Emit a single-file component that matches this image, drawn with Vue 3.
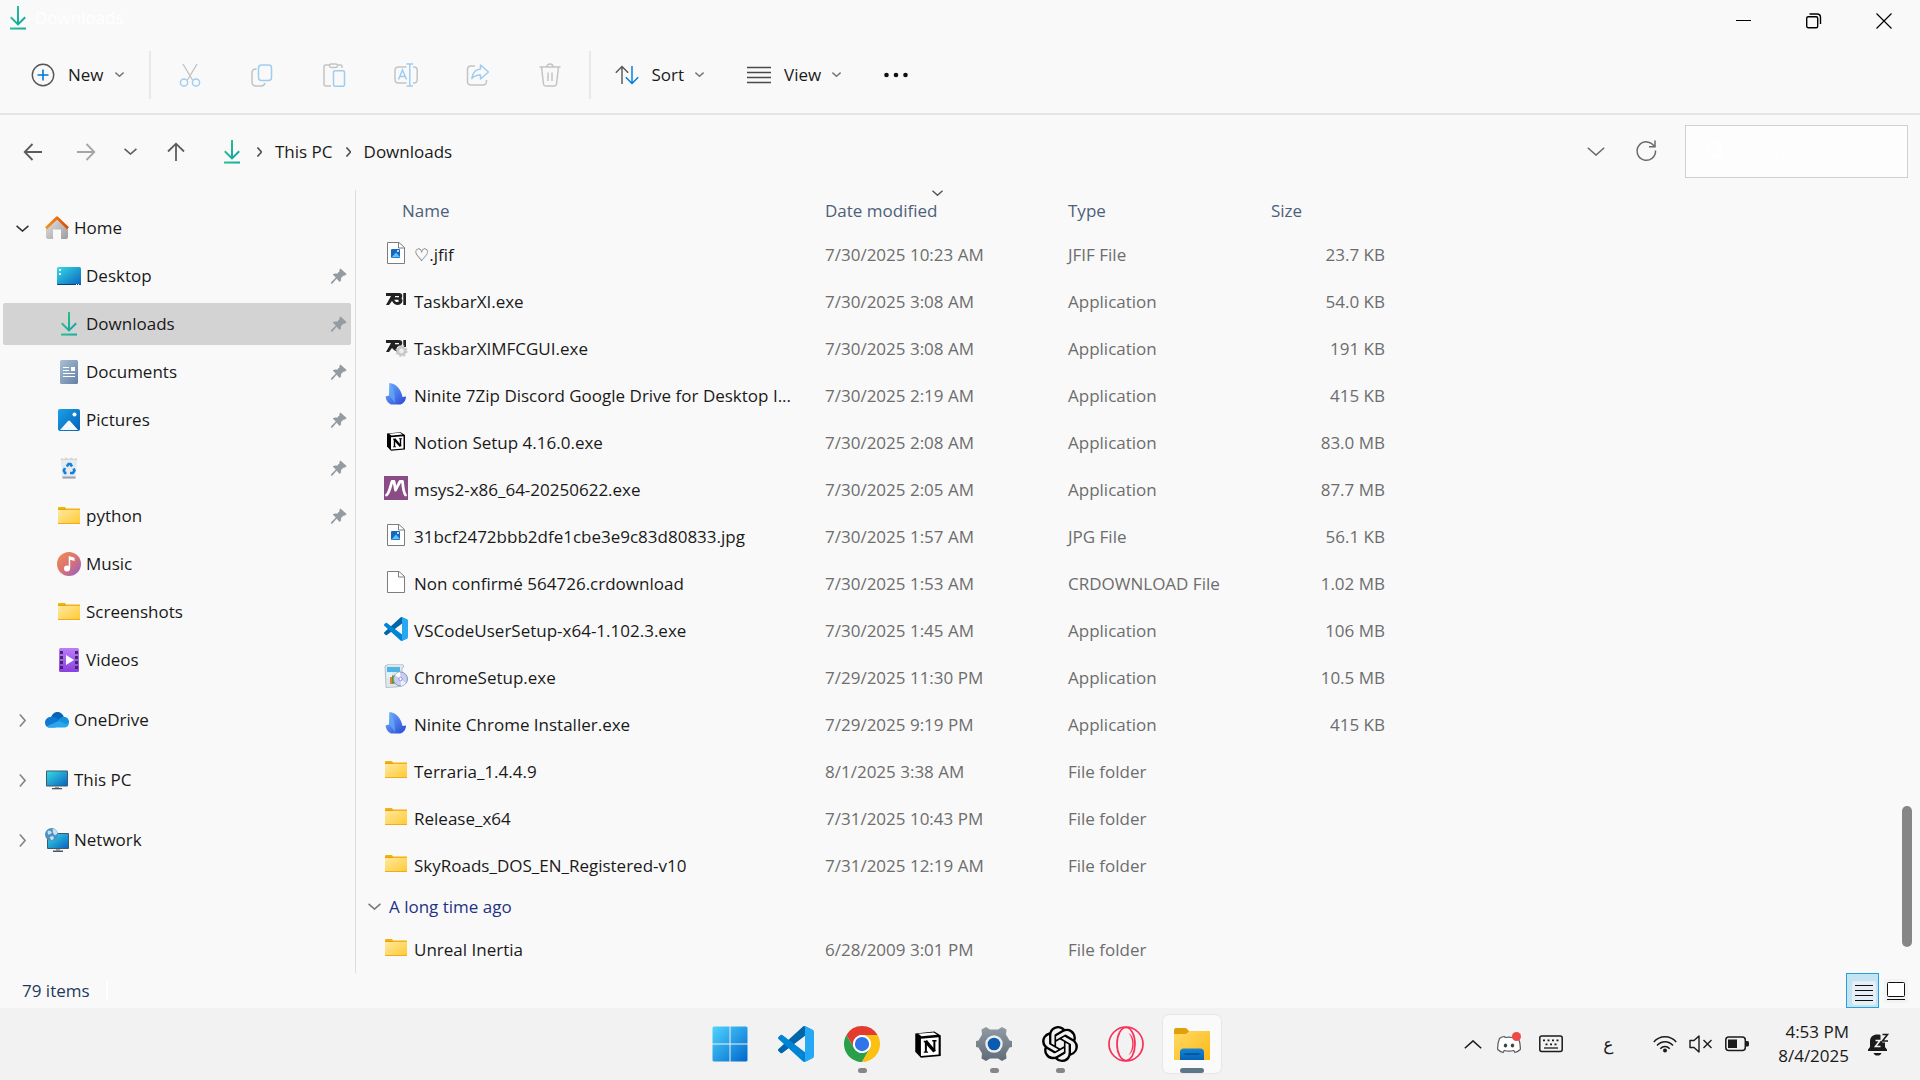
<script setup>
const editTools = [
  { icon: 'cut', label: 'Cut' },
  { icon: 'copy', label: 'Copy' },
  { icon: 'paste', label: 'Paste' },
  { icon: 'rename', label: 'Rename' },
  { icon: 'share', label: 'Share' },
  { icon: 'trash', label: 'Delete' },
]

const pinned = [
  { icon: 'desktop', name: 'Desktop', pin: true },
  { icon: 'download', name: 'Downloads', pin: true, active: true },
  { icon: 'documents', name: 'Documents', pin: true },
  { icon: 'pictures', name: 'Pictures', pin: true },
  { icon: 'recycle', name: '', pin: true },
  { icon: 'folder', name: 'python', pin: true },
  { icon: 'music', name: 'Music' },
  { icon: 'folder', name: 'Screenshots' },
  { icon: 'videos', name: 'Videos' },
]

const roots = [
  { icon: 'onedrive', name: 'OneDrive' },
  { icon: 'pc', name: 'This PC' },
  { icon: 'network', name: 'Network' },
]

const files = [
  { icon: 'image', name: '♡.jfif', date: '7/30/2025 10:23 AM', type: 'JFIF File', size: '23.7 KB' },
  { icon: 'tbi', name: 'TaskbarXI.exe', date: '7/30/2025 3:08 AM', type: 'Application', size: '54.0 KB' },
  { icon: 'tbigear', name: 'TaskbarXIMFCGUI.exe', date: '7/30/2025 3:08 AM', type: 'Application', size: '191 KB' },
  { icon: 'ninite', name: 'Ninite 7Zip Discord Google Drive for Desktop I...', date: '7/30/2025 2:19 AM', type: 'Application', size: '415 KB' },
  { icon: 'notion', name: 'Notion Setup 4.16.0.exe', date: '7/30/2025 2:08 AM', type: 'Application', size: '83.0 MB' },
  { icon: 'msys', name: 'msys2-x86_64-20250622.exe', date: '7/30/2025 2:05 AM', type: 'Application', size: '87.7 MB' },
  { icon: 'image', name: '31bcf2472bbb2dfe1cbe3e9c83d80833.jpg', date: '7/30/2025 1:57 AM', type: 'JPG File', size: '56.1 KB' },
  { icon: 'blank', name: 'Non confirmé 564726.crdownload', date: '7/30/2025 1:53 AM', type: 'CRDOWNLOAD File', size: '1.02 MB' },
  { icon: 'vscode', name: 'VSCodeUserSetup-x64-1.102.3.exe', date: '7/30/2025 1:45 AM', type: 'Application', size: '106 MB' },
  { icon: 'setup', name: 'ChromeSetup.exe', date: '7/29/2025 11:30 PM', type: 'Application', size: '10.5 MB' },
  { icon: 'ninite', name: 'Ninite Chrome Installer.exe', date: '7/29/2025 9:19 PM', type: 'Application', size: '415 KB' },
  { icon: 'folder', name: 'Terraria_1.4.4.9', date: '8/1/2025 3:38 AM', type: 'File folder', size: '' },
  { icon: 'folder', name: 'Release_x64', date: '7/31/2025 10:43 PM', type: 'File folder', size: '' },
  { icon: 'folder', name: 'SkyRoads_DOS_EN_Registered-v10', date: '7/31/2025 12:19 AM', type: 'File folder', size: '' },
]

const olderFiles = [
  { icon: 'folder', name: 'Unreal Inertia', date: '6/28/2009 3:01 PM', type: 'File folder', size: '' },
]

const apps = [
  { icon: 'start', label: 'Start' },
  { icon: 'vscode', label: 'Visual Studio Code' },
  { icon: 'chrome', label: 'Google Chrome', running: true },
  { icon: 'notion', label: 'Notion', small: true },
  { icon: 'settings', label: 'Settings', running: true },
  { icon: 'gpt', label: 'ChatGPT', running: true },
  { icon: 'opera', label: 'Opera' },
  { icon: 'explorer', label: 'File Explorer', active: true },
]
</script>

<template>
  <div class="desktop">
    <svg class="sprite" width="0" height="0" aria-hidden="true">
      <defs>
        <linearGradient id="gDown" x1="0" y1="0" x2="1" y2="1"><stop offset="0" stop-color="#2ecc87" /><stop offset="1" stop-color="#0d9ea6" /></linearGradient>
        <linearGradient id="gScreen" x1="0" y1="0" x2="1" y2="1"><stop offset="0" stop-color="#35dbe4" /><stop offset="1" stop-color="#0a64c0" /></linearGradient>
        <linearGradient id="gFolder" x1="0" y1="0" x2="1" y2="1"><stop offset="0" stop-color="#ffe8a0" /><stop offset="1" stop-color="#ffc931" /></linearGradient>
        <linearGradient id="gRoof" x1="0" y1="0" x2="1" y2="0"><stop offset="0" stop-color="#f7931a" /><stop offset="1" stop-color="#d84a0b" /></linearGradient>
        <linearGradient id="gWall" x1="0" y1="0" x2="1" y2="1"><stop offset="0" stop-color="#e4e4e4" /><stop offset="1" stop-color="#9c9c9c" /></linearGradient>
        <linearGradient id="gDoc" x1="0" y1="0" x2="1" y2="1"><stop offset="0" stop-color="#a9bfd8" /><stop offset="1" stop-color="#6580a3" /></linearGradient>
        <linearGradient id="gPic" x1="0" y1="0" x2="1" y2="1"><stop offset="0" stop-color="#1ba1e8" /><stop offset="1" stop-color="#0460b5" /></linearGradient>
        <linearGradient id="gMusic" x1="0" y1="0" x2="1" y2="1"><stop offset="0" stop-color="#f58e4d" /><stop offset=".55" stop-color="#d4707a" /><stop offset="1" stop-color="#8c62c9" /></linearGradient>
        <linearGradient id="gVideo" x1="0" y1="0" x2="0" y2="1"><stop offset="0" stop-color="#bb7df5" /><stop offset="1" stop-color="#8a40e0" /></linearGradient>
        <linearGradient id="gNinite" x1="0" y1="0" x2="1" y2="1"><stop offset="0" stop-color="#74b4ff" /><stop offset="1" stop-color="#2746d4" /></linearGradient>
        <linearGradient id="gStart" x1="0" y1="0" x2="1" y2="1"><stop offset="0" stop-color="#4fd4ff" /><stop offset="1" stop-color="#0067cc" /></linearGradient>
        <linearGradient id="gGear" x1="0" y1="0" x2="0" y2="1"><stop offset="0" stop-color="#929ba3" /><stop offset="1" stop-color="#5f6b77" /></linearGradient>
        <linearGradient id="gExplorer" x1="0" y1="0" x2="1" y2="1"><stop offset="0" stop-color="#ffda68" /><stop offset="1" stop-color="#fdb813" /></linearGradient>
        <linearGradient id="gTray" x1="0" y1="0" x2="0" y2="1"><stop offset="0" stop-color="#1485d8" /><stop offset="1" stop-color="#0662b4" /></linearGradient>
      </defs>

      <symbol id="i-download" viewBox="0 0 24 24">
        <path d="M11 0h2v18h-2zM5.500 10.500l6.500 6.500 6.500-6.500 1.400 1.400L12 19.700l-7.900-7.800z" fill="url(#gDown)" />
        <path d="M4 21.500h16v2H4z" fill="url(#gDown)" />
      </symbol>

      <symbol id="i-new" viewBox="0 0 24 24"><circle cx="12" cy="12" r="10.700" fill="none" stroke="#555" stroke-width="1.400" /><path d="M12 6.500v11M6.500 12h11" stroke="#0078d4" stroke-width="1.600" /></symbol>
      <symbol id="i-cut" viewBox="0 0 24 24"><path d="M5 1l9.500 16M19 1L9.500 17" stroke="#c4c4c4" stroke-width="1.400" fill="none" /><g fill="#f9f9f9" stroke="#9fcdf0" stroke-width="1.500"><circle cx="6" cy="19.500" r="3.600" /><circle cx="18" cy="19.500" r="3.600" /></g></symbol>
      <symbol id="i-copy" viewBox="0 0 24 24"><path d="M6.500 6C3.500 6 2 7 2 9.500V19c0 2.500 1.500 4 4 4h5c2.500 0 3.500-1 4-3" fill="none" stroke="#c4c4c4" stroke-width="1.500" /><rect x="8.500" y="2" width="13" height="15.500" rx="3" fill="none" stroke="#9fcdf0" stroke-width="1.500" /></symbol>
      <symbol id="i-paste" viewBox="0 0 24 24"><path d="M8 2H3.500C2.500 2 2 2.500 2 3.500v18c0 1 .5 1.500 1.500 1.500H9M16 2h2.500c1 0 1.500.5 1.500 1.500V5" fill="none" stroke="#c4c4c4" stroke-width="1.500" /><rect x="7.500" y="1" width="8" height="3.500" rx="1.700" fill="none" stroke="#c4c4c4" stroke-width="1.500" /><rect x="11.500" y="7.800" width="11" height="15.500" rx="1.500" fill="none" stroke="#9fcdf0" stroke-width="1.500" /></symbol>
      <symbol id="i-rename" viewBox="0 0 24 24"><path d="M12.500 4H4.500C2 4 1 5 1 7.500v9C1 19 2 20 4.500 20h8M19 4h1c2.200 0 3.200 1 3.200 3.500v9c0 2.500-1 3.500-3.200 3.500h-1" fill="none" stroke="#c4c4c4" stroke-width="1.500" /><path d="M4.500 16.500L8.500 7l4 9.500M6 13.500h5M15.800 1v22M12.500 1h6.500M12.500 23h6.500" fill="none" stroke="#9fcdf0" stroke-width="1.500" /></symbol>
      <symbol id="i-share" viewBox="0 0 24 24"><path d="M9 3H5C2.500 3 1.500 4.500 1.500 6.500v12C1.500 20.500 3 22 5 22h12c2.500 0 3.500-1.500 3.500-4v-1" fill="none" stroke="#c4c4c4" stroke-width="1.500" /><path d="M14.500 2l8 7-8 7v-4c-4 0-6.500 1-8.700 3.500C6.500 10 9.500 6.500 14.500 6z" fill="none" stroke="#9fcdf0" stroke-width="1.500" stroke-linejoin="round" /></symbol>
      <symbol id="i-trash" viewBox="0 0 24 24"><path d="M1.500 4h21M9 4c0-4 6-4 6 0M3.500 4l2 17c.2 1.500 1 2 2 2h9c1 0 1.800-.5 2-2l2-17M10 9.500v8.500M14 9.500v8.500" fill="none" stroke="#c4c4c4" stroke-width="1.500" /></symbol>
      <symbol id="i-sort" viewBox="0 0 24 24"><path d="M7 21V4M.8 9.700L7 3.500l6.200 6.200" fill="none" stroke="#555" stroke-width="1.400" /><path d="M17 3v17M10.800 14.300l6.200 6.200 6.200-6.200" fill="none" stroke="#0078d4" stroke-width="1.400" /></symbol>
      <symbol id="i-view" viewBox="0 0 24 24"><path d="M0 4.500h24M0 9.500h24M0 14.500h24M0 19.500h24" stroke="#4a4a4a" stroke-width="1.300" /></symbol>
      <symbol id="i-more" viewBox="0 0 24 24"><g fill="#111"><circle cx="2.500" cy="12" r="2.300" /><circle cx="12" cy="12" r="2.300" /><circle cx="21.500" cy="12" r="2.300" /></g></symbol>
      <symbol id="i-chev" viewBox="0 0 16 8"><path d="M.7.7L8 7.200 15.300.7" fill="none" stroke="currentColor" stroke-width="1.500" vector-effect="non-scaling-stroke" /></symbol>
      <symbol id="i-chevr" viewBox="0 0 8 16"><path d="M.7.7L7.200 8 .7 15.300" fill="none" stroke="currentColor" stroke-width="1.600" vector-effect="non-scaling-stroke" /></symbol>
      <symbol id="i-back" viewBox="0 0 24 24"><path d="M21 12H4M11.500 4L3.700 12l7.800 8" fill="none" stroke="currentColor" stroke-width="1.800" /></symbol>
      <symbol id="i-refresh" viewBox="0 0 24 24"><path d="M19.300 6.500A9.200 9.200 0 1 0 20.500 10.500M20 .5v6.300h-6" fill="none" stroke="#6a6a6a" stroke-width="1.500" /></symbol>
      <symbol id="i-search" viewBox="0 0 24 24"><circle cx="10" cy="10" r="7" fill="none" stroke="#fff" stroke-width="2" /><path d="M15 15l6 6" stroke="#fff" stroke-width="2" /></symbol>
      <symbol id="i-min" viewBox="0 0 16 16"><path d="M0 7.500h15" stroke="#000" /></symbol>
      <symbol id="i-restore" viewBox="0 0 16 16"><rect x=".7" y="3.700" width="11" height="11" rx="1.500" fill="none" stroke="#000" stroke-width="1.400" /><path d="M3.500 1h7.500c2.500 0 3.500 1 3.500 3.500V11" fill="none" stroke="#000" stroke-width="1.400" /></symbol>
      <symbol id="i-close" viewBox="0 0 16 16"><path d="M.5.5l15 15M15.500.5l-15 15" stroke="#000" stroke-width="1.200" /></symbol>
      <symbol id="i-pin" viewBox="0 0 16 16"><path d="M9.500.5L15.500 6c-.5 1.200-1.500 1.500-2.700 1.500L10 10c.3 2-.1 3-1.200 4L5.500 10.800 1.500 15.500 0 15.700v-1.500l4.800-4.700L1.700 6.500C3 5.500 4.200 5.300 6 5.700l2.500-2.500C8.300 2 8.700 1 9.500.5z" fill="#939ca2" /></symbol>

      <symbol id="i-home" viewBox="0 0 24 24"><path d="M1 11.500L12 2l11 9.500V21a2 2 0 0 1-2 2h-5v-9.500H8V23H3a2 2 0 0 1-2-2z" fill="url(#gWall)" /><path d="M1 12.300L12 1.800l11 10.500" fill="none" stroke="url(#gRoof)" stroke-width="2.800" stroke-linejoin="round" /></symbol>
      <symbol id="i-desktop" viewBox="0 0 24 24"><rect y="3" width="24" height="18" rx="1.500" fill="url(#gScreen)" /><path d="M0 20h24c0 .7-.5 1-1.500 1h-21C.5 21 0 20.700 0 20z" fill="#0a3f70" /><path d="M2 5h2v2H2zM2 9h2v2H2zM19 20h1v1h-1zM21 20h1v1h-1z" fill="#fff" /></symbol>
      <symbol id="i-documents" viewBox="0 0 24 24"><rect x="3" width="18" height="24" rx="1.500" fill="url(#gDoc)" /><path d="M14 7h4v4h-4zM6 7h6v1H6zM6 10h6v1H6zM6 13h12v1H6zM6 16h12v1H6z" fill="#fff" /></symbol>
      <symbol id="i-pictures" viewBox="0 0 24 24"><rect x="1" y="1" width="22" height="22" rx="2" fill="url(#gPic)" /><path d="M3 22l8-9q1-1 2 0l8 9z" fill="#f3f8fd" /><circle cx="17.500" cy="6.500" r="2" fill="#fff" /></symbol>
      <symbol id="i-recycle" viewBox="0 0 24 24"><path d="M3.500 3.500h17L18.500 22c0 .6-.4 1-1 1h-11c-.6 0-1-.4-1-1z" fill="#e8ebee" /><path d="M5.300 20.500h13.400l-.2 2H5.500z" fill="#9aa3ab" /><path d="M4 2l3 1 2-1.500L12 3l2-1.500L17 3l3-1v2H4z" fill="#d3d7da" /><path d="M9.800 10.500L11.500 8h2l1.500 2.500M16.500 12.500l1 2-1.500 2.500h-3M9.500 17H8l-1.200-2.500L8 12" fill="none" stroke="#1281dc" stroke-width="2.600" /></symbol>
      <symbol id="i-folder" viewBox="0 0 24 24"><path d="M1 4.500C1 3.500 1.500 3 2 3h6l1 1.500H23V9H1z" fill="#f5b012" /><path d="M1 6h22v14H1z" fill="url(#gFolder)" /><path d="M1 6h7.500L9.500 5H1z" fill="#e7a409" /><path d="M1 19h22v1H1z" fill="#eead1c" /></symbol>
      <symbol id="i-music" viewBox="0 0 24 24"><circle cx="12" cy="12" r="12" fill="url(#gMusic)" /><circle cx="10" cy="16.500" r="3" fill="#fff" /><path d="M11.700 4l5.800 1.800V9l-4.300-1.200v8.700h-1.500z" fill="#fff" /></symbol>
      <symbol id="i-videos" viewBox="0 0 24 24"><rect x="2" width="20" height="24" rx="1.500" fill="url(#gVideo)" /><path d="M3 3h3v3H3zM3 8h3v3H3zM3 13h3v3H3zM3 18h3v3H3zM18 3h3v3h-3zM18 8h3v3h-3zM18 13h3v3h-3zM18 18h3v3h-3z" fill="#44266d" /><path d="M9 7l8 5-8 5z" fill="#fff" /></symbol>
      <symbol id="i-onedrive" viewBox="0 0 24 24"><path d="M6 9C8 5 10 4 12.500 4c3 0 5.500 2 6.300 5l-6 4z" fill="#0364b8" /><path d="M5.500 9c2.500-.5 4.500 0 6.500 1.500l7 5-9 4H5C2 19.500 0 17.500 0 14.500S2.500 9 5.500 9z" fill="#0f78d4" /><path d="M19 9c3 0 5 2.500 5 5.500s-2 5-5 5H5c-1.500 0-2.500-.3-3.500-1.300L13.500 13c2-2.500 3.500-4 5.500-4z" fill="#28a8ea" /><path d="M13 12.500C15 10 16.500 9 19 9c2.500 0 4.500 2 5 4.500l-2 3z" fill="#1490df" /></symbol>
      <symbol id="i-pc" viewBox="0 0 24 24"><rect x="1" y="2.500" width="22" height="16" rx="1" fill="#3e5a6c" /><path d="M2 3.500h20v14H2z" fill="url(#gScreen)" /><path d="M10 18.500h4V20h-4z" fill="#9aa1a8" /><path d="M7 20h10v1.300H7z" fill="#4c565f" /></symbol>
      <symbol id="i-network" viewBox="0 0 24 24"><rect x="2" y="5" width="22" height="16" rx="1" fill="#3e5a6c" /><path d="M3 6h20v14H3z" fill="url(#gScreen)" /><path d="M11 21h4v1.500h-4z" fill="#9aa1a8" /><path d="M8 22.500h10V24H8z" fill="#4c565f" /><circle cx="6.500" cy="6.500" r="6.500" fill="#4f90c0" /><path d="M2.500 3.500C4.500 1.500 5.500 3 6.500 4s-2 3-3.500 2.500zM7.500 1c3 0 4.500 2 5 4.500L10 7.500 8 5zM4.500 9L8 8l1 2.500-2.500 2z" fill="#c6e1f1" /></symbol>

      <symbol id="i-blank" viewBox="0 0 24 24"><path d="M3.500 1.500H15L20.500 6.500V22.500h-17z" fill="#fff" stroke="#7d7d7d" /><path d="M14.500 1.500v5.500h6" fill="none" stroke="#7d7d7d" /></symbol>
      <symbol id="i-image" viewBox="0 0 24 24"><path d="M3.500 1.500H15L20.500 6.500V22.500h-17z" fill="#fff" stroke="#7d7d7d" /><path d="M14.500 1.500v5.500h6" fill="none" stroke="#7d7d7d" /><rect x="7" y="8" width="9" height="9" rx="1" fill="#1767c0" /><path d="M7.500 16.500l4.500-5 4 4.500z" fill="#5bc6f5" /><circle cx="14" cy="10" r="1" fill="#fff" /></symbol>
      <symbol id="i-tbi" viewBox="0 0 24 24"><path d="M2 5h13c3.500 0 4 3 2.500 5.300 2.500 3-.5 6.700-3.500 6.700-2.500 0-4-1-6-4l-3 4H2l5-9H2z" fill="#222" /><path d="M11 8h4v1.300h-4zM10 11.700h4.500V14H12z" fill="#f9f9f9" /><path d="M19.300 5H22v12h-2.700z" fill="#222" /></symbol>
      <symbol id="i-tbigear" viewBox="0 0 24 24"><path d="M2 5h13c3.500 0 4 3 2.500 5.300L13 12v4.500c-2-.5-3.500-1.500-5-3.500l-3 4H2l5-9H2z" fill="#222" /><path d="M11 8h4v1.300h-4z" fill="#f9f9f9" /><path d="M19.300 5H22v7h-2.700z" fill="#222" /><circle cx="17.500" cy="16" r="3.700" fill="#ededed" stroke="#c8c8c8" stroke-width="2.500" /><circle cx="17.500" cy="16" r="5.300" fill="none" stroke="#c8c8c8" stroke-width="1.500" stroke-dasharray="2 2.200" /></symbol>
      <symbol id="i-ninite" viewBox="0 0 24 24"><path d="M5.500 1C12 1.500 17 7 18.500 15l3.500-.5c0 4-2.500 7-5.500 8H7C4 21 2 18.500 1.500 14.500L5 13.500z" fill="url(#gNinite)" /><path d="M5.500 1c3 4 6 9 5.500 20-2-3-4-5-6-7.500z" fill="#69aefc" opacity=".65" /></symbol>
      <symbol id="i-notion" viewBox="0 0 24 24"><path d="M3 4.500l13.500-1.300L21 6v14.500L7 21.700 3 17.500z" fill="#000" /><path d="M5 4.800l11-1 2.500 1.600L7.500 6.500z" fill="#fff" /><path d="M7 8.300l12.500-1V19.400L7 20.400z" fill="#fff" /><path d="M10.500 10.300v7.400M16.500 9.800v7.400" stroke="#000" stroke-width="1.400" /><path d="M10.300 10l6.300 7.300" stroke="#000" stroke-width="2.400" /><path d="M9 10.100h2.600M15 9.700h3M9 17.800h3" stroke="#000" stroke-width=".9" /></symbol>
      <symbol id="i-msys" viewBox="0 0 24 24"><path d="M0 0h24v24H0z" fill="#894c84" /><path d="M2.500 19C5 18 6.500 10 8 5.500h2L11.500 14 16 5.500h2.500c.5 6 1 11 3 13.500" fill="none" stroke="#fff" stroke-width="2.800" stroke-linejoin="round" stroke-linecap="round" /></symbol>
      <symbol id="i-setup" viewBox="0 0 24 24"><path d="M1 2l4-2h13l2 2-2 3v17l-6 1-10 .5z" fill="#dfe7ee" stroke="#a8b5bf" stroke-width=".8" /><path d="M3 3h13v5H3z" fill="#52b4e6" /><path d="M3 9l5-1v5l-5 1z" fill="#e4f4fb" /><path d="M6 13h4v7H6z" fill="#e8812c" /><path d="M8 11.500h3.500v8H8z" fill="#3ca53c" /><circle cx="16.500" cy="15" r="7" fill="#c7cdf4" stroke="#8e97a6" /><path d="M16.500 15L11 11a7 7 0 0 1 5-3z" fill="#fff" /><path d="M16.500 15l5.500 4a7 7 0 0 1-5 3z" fill="#eef" /><circle cx="16.500" cy="15" r="1.700" fill="#fff" stroke="#8e97d6" /></symbol>
      <symbol id="i-vscode" viewBox="0 0 100 100"><path d="M96.460 10.800L75.860.880A6.250 6.250 0 0 0 68.750 2.080L1.300 63.580a4.170 4.170 0 0 0 0 6.170l5.510 5a4.170 4.170 0 0 0 5.320.240L93.360 13.370C96.090 11.300 100 13.250 100 16.670v-.240a6.250 6.250 0 0 0-3.540-5.630z" fill="#0065a9" /><path d="M96.460 89.200l-20.600 9.920a6.250 6.250 0 0 1-7.110-1.200L1.300 36.420a4.170 4.170 0 0 1 0-6.170l5.510-5a4.170 4.170 0 0 1 5.320-.240l81.230 61.620c2.730 2.070 6.640.120 6.640-3.300v.240a6.250 6.250 0 0 1-3.540 5.630z" fill="#0085d6" /><path d="M75.860 99.130a6.250 6.250 0 0 1-7.110-1.210C71.060 100.220 75 98.590 75 95.330V4.670c0-3.260-3.940-4.890-6.250-2.590A6.250 6.250 0 0 1 75.860.870l20.600 9.910A6.250 6.250 0 0 1 100 16.410v67.180a6.250 6.250 0 0 1-3.540 5.630z" fill="#27a8f4" /></symbol>

      <symbol id="i-start" viewBox="0 0 36 36"><rect x=".5" y=".5" width="35" height="35" rx="1.500" fill="url(#gStart)" /><path d="M17.500 0h1v36h-1zM0 17.500h36v1H0z" fill="#f2f2f2" /></symbol>
      <symbol id="i-chrome" viewBox="0 0 48 48"><path d="M24 0A24 24 0 0 1 44.780 12H24a12 12 0 0 0-10.390 18L3.220 12A24 24 0 0 1 24 0z" fill="#e33b2e" /><path d="M3.220 12L13.610 30A12 12 0 0 0 34.390 30L24 48A24 24 0 0 1 3.220 12z" fill="#2a9f4b" /><path d="M44.780 12A24 24 0 0 1 24 48L34.390 30A12 12 0 0 0 24 12z" fill="#fcc012" /><circle cx="24" cy="24" r="12" fill="#fff" /><circle cx="24" cy="24" r="9.500" fill="#2f74ea" /></symbol>
      <symbol id="i-settings" viewBox="0 0 36 36"><path d="M10 1l4 2.500h8L26 1l4.500 2.500-.5 5 3.500 6 2.500.5v6l-2.500.5-3.500 6 .5 5L26 35l-4-2.500h-8L10 35l-4.500-2.500.5-5-3.500-6L0 21v-6l2.500-.5 3.500-6-.5-5z" fill="url(#gGear)" /><circle cx="18" cy="18" r="8.700" fill="#eceef0" /><circle cx="18" cy="18" r="6.300" fill="#0b5cb0" /></symbol>
      <symbol id="i-gpt" viewBox="0 0 24 24"><path d="M22.282 9.821a5.985 5.985 0 0 0-.516-4.910 6.046 6.046 0 0 0-6.510-2.900A6.065 6.065 0 0 0 4.981 4.182a5.985 5.985 0 0 0-3.998 2.900 6.046 6.046 0 0 0 .743 7.097 5.980 5.980 0 0 0 .511 4.911 6.051 6.051 0 0 0 6.515 2.900A5.985 5.985 0 0 0 13.260 24a6.056 6.056 0 0 0 5.772-4.206 5.990 5.990 0 0 0 3.998-2.900 6.056 6.056 0 0 0-.748-7.073zm-9.022 12.608a4.476 4.476 0 0 1-2.876-1.041l.142-.080 4.778-2.758a.795.795 0 0 0 .393-.681v-6.737l2.020 1.169a.071.071 0 0 1 .038.052v5.583a4.504 4.504 0 0 1-4.495 4.494zm-9.661-4.125a4.471 4.471 0 0 1-.535-3.014l.142.085 4.783 2.758a.771.771 0 0 0 .781 0l5.843-3.369v2.332a.080.080 0 0 1-.033.062L9.740 19.950a4.499 4.499 0 0 1-6.141-1.646zM2.341 7.896a4.485 4.485 0 0 1 2.366-1.973V11.600a.766.766 0 0 0 .388.677l5.814 3.354-2.020 1.169a.076.076 0 0 1-.071 0l-4.830-2.787A4.504 4.504 0 0 1 2.341 7.872zm16.596 3.856L13.104 8.364 15.119 7.200a.076.076 0 0 1 .071 0l4.830 2.791a4.494 4.494 0 0 1-.677 8.104v-5.677a.790.790 0 0 0-.407-.667zm2.011-3.023l-.142-.085-4.774-2.782a.776.776 0 0 0-.785 0L9.409 9.230V6.897a.066.066 0 0 1 .028-.062l4.830-2.787a4.499 4.499 0 0 1 6.680 4.660zM8.307 12.863l-2.020-1.164a.080.080 0 0 1-.038-.057V6.074a4.499 4.499 0 0 1 7.376-3.454l-.142.081L8.704 5.459a.795.795 0 0 0-.393.681zm1.098-2.365l2.602-1.500 2.607 1.500v2.999l-2.597 1.500-2.607-1.500z" fill="#000" /></symbol>
      <symbol id="i-opera" viewBox="0 0 36 36"><g fill="none" stroke="#fa2e56"><circle cx="18" cy="18" r="17" stroke-width="1.700" /><ellipse cx="18" cy="18" rx="9" ry="16.500" stroke-width="1.700" /></g><path d="M20.500 7c7 3 7 19 0 22 5-5.500 5-16.500 0-22z" fill="#fa2e56" /></symbol>
      <symbol id="i-explorer" viewBox="0 0 36 36"><path d="M0 4.500C0 3 .7 2 2 2h10l3 3v4H0z" fill="#dfa008" /><path d="M0 8h12l3.500-3H36v29H0z" fill="url(#gExplorer)" /><path d="M6 34v-8c0-2 1.500-3.500 3.500-3.500h17c2 0 3.500 1.500 3.500 3.500v8z" fill="url(#gTray)" /><path d="M10.500 28h15" stroke="#044f91" stroke-width="1.500" /></symbol>

      <symbol id="i-discord" viewBox="0 0 24 24"><path d="M7 4.500l1.500 1c2.500-.5 4.500-.5 7 0l1.500-1c2 .3 3.500 1 4.500 2 1.500 3.500 2 7 1.800 11-1.800 1.600-3.500 2.500-5.300 3l-1.300-2c-3 .7-6.400.7-9.400 0L6 20.500c-1.800-.5-3.500-1.400-5.300-3-.2-4 .3-7.500 1.800-11 1-1 2.500-1.700 4.500-2z" fill="#fff" stroke="#5a5a5a" stroke-width="1.200" /><ellipse cx="8.500" cy="13.500" rx="1.700" ry="2" fill="#444" /><ellipse cx="15.500" cy="13.500" rx="1.700" ry="2" fill="#444" /><circle cx="19.500" cy="4.500" r="4.500" fill="#f04747" /></symbol>
      <symbol id="i-keyboard" viewBox="0 0 24 24"><rect x=".8" y="4" width="22.400" height="15.500" rx="2" fill="none" stroke="#1b1b1b" stroke-width="1.500" /><path d="M4 8.300h2M8.500 8.300h2M13 8.300h2M17.500 8.300h2M6.500 12.300h2M11 12.300h2M15.500 12.300h2" stroke="#1b1b1b" stroke-width="1.800" /><path d="M5 16h14" stroke="#1b1b1b" stroke-width="1.300" /></symbol>
      <symbol id="i-wifi" viewBox="0 0 24 24"><path d="M.8 10c6-7 16.400-7 22.400 0M4 13.500c4.500-5 11.500-5 16 0M7.300 16.700c2.700-3 6.700-3 9.400 0" fill="none" stroke="#1b1b1b" stroke-width="1.500" /><circle cx="12" cy="18.500" r="2" fill="#1b1b1b" /></symbol>
      <symbol id="i-volume" viewBox="0 0 24 24"><path d="M1 8.500h4l5-4.500v16l-5-4.500H1z" fill="none" stroke="#1b1b1b" stroke-width="1.400" stroke-linejoin="round" /><path d="M14.500 8l8 8M22.500 8l-8 8" stroke="#1b1b1b" stroke-width="1.400" /></symbol>
      <symbol id="i-battery" viewBox="0 0 24 24"><rect x=".8" y="5" width="19.500" height="13.500" rx="3" fill="none" stroke="#1b1b1b" stroke-width="1.500" /><path d="M3 7.500h9v8.500H3z" fill="#1b1b1b" /><path d="M21 9h1.500c1 0 1.500.7 1.500 2.700s-.5 2.800-1.500 2.800H21z" fill="#1b1b1b" /></symbol>
      <symbol id="i-bell" viewBox="0 0 24 24"><path d="M2 17.500l2-2.500v-5.500C4 5 7 2.500 11.500 2.500S19 5 19 9.500V15l2 2.500v1.500H2zM7.500 21h8c-.5 1.700-2 2.600-4 2.600S8 22.700 7.500 21z" fill="#1b1b1b" /><path d="M14.500 1H24v9.500h-7.500L14.500 8z" fill="#f2f2f2" /><path d="M9.500 8.500h4.500l-4.500 6h5" fill="none" stroke="#f2f2f2" stroke-width="1.600" /><path d="M16.500 2.500h5L16.500 9h5.500" fill="none" stroke="#1b1b1b" stroke-width="1.600" /></symbol>
      <symbol id="i-details" viewBox="0 0 24 24"><rect width="24" height="24" rx="3" fill="#e6eff5" /><path d="M3 4.500h18M3 9.500h18M3 14.500h18M3 19.500h18" stroke="#111" /></symbol>
      <symbol id="i-tiles" viewBox="0 0 24 24"><rect width="24" height="24" rx="3" fill="#f3f3f3" /><rect x="3.500" y="3.500" width="17" height="14" rx="1" fill="#fff" stroke="#111" /><path d="M3 20.500h18" stroke="#111" /></symbol>
    </svg>

    <div class="window">
      <header class="titlebar">
        <svg class="ic"><use href="#i-download" /></svg>
        <h1 class="title">Downloads</h1>
        <div class="controls">
          <button aria-label="Minimize"><svg class="ic16"><use href="#i-min" /></svg></button>
          <button aria-label="Restore"><svg class="ic16"><use href="#i-restore" /></svg></button>
          <button aria-label="Close"><svg class="ic16"><use href="#i-close" /></svg></button>
        </div>
      </header>

      <div class="toolbar" role="toolbar">
        <button class="labelled"><svg class="ic"><use href="#i-new" /></svg>New<svg class="drop"><use href="#i-chev" /></svg></button>
        <span class="sep"></span>
        <button v-for="t in editTools" :key="t.icon" class="tool" :aria-label="t.label" disabled><svg class="ic"><use :href="'#i-' + t.icon" /></svg></button>
        <span class="sep"></span>
        <button class="labelled"><svg class="ic"><use href="#i-sort" /></svg>Sort<svg class="drop"><use href="#i-chev" /></svg></button>
        <button class="labelled"><svg class="ic"><use href="#i-view" /></svg>View<svg class="drop"><use href="#i-chev" /></svg></button>
        <button class="more" aria-label="See more"><svg class="ic"><use href="#i-more" /></svg></button>
      </div>

      <div class="address">
        <button class="nav" aria-label="Back"><svg class="arrow"><use href="#i-back" /></svg></button>
        <button class="nav faded" aria-label="Forward"><svg class="arrow forward"><use href="#i-back" /></svg></button>
        <button class="recent" aria-label="Recent locations"><svg class="chev"><use href="#i-chev" /></svg></button>
        <button class="nav" aria-label="Up"><svg class="arrow up"><use href="#i-back" /></svg></button>
        <nav class="crumbs" aria-label="Path">
          <svg class="ic"><use href="#i-download" /></svg>
          <svg class="crumb-sep"><use href="#i-chevr" /></svg>
          <a href="#">This PC</a>
          <svg class="crumb-sep"><use href="#i-chevr" /></svg>
          <a href="#">Downloads</a>
        </nav>
        <button class="side" aria-label="Previous locations"><svg class="chev wide"><use href="#i-chev" /></svg></button>
        <button class="side" aria-label="Refresh"><svg class="ic"><use href="#i-refresh" /></svg></button>
        <label class="search">
          <svg class="ic"><use href="#i-search" /></svg>
          <input type="search" placeholder="Search Downloads" aria-label="Search Downloads" />
        </label>
      </div>

      <div class="body">
        <nav class="sidebar" aria-label="Folders">
          <a href="#" class="row root"><span class="toggle"><svg class="chev"><use href="#i-chev" /></svg></span><svg class="ic"><use href="#i-home" /></svg>Home</a>
          <a v-for="p in pinned" :key="p.icon + p.name" href="#" class="row child" :class="{ active: p.active }">
            <svg class="ic"><use :href="'#i-' + p.icon" /></svg><span class="label">{{ p.name }}</span>
            <svg v-if="p.pin" class="ic16"><use href="#i-pin" /></svg>
          </a>
          <a v-for="r in roots" :key="r.icon" href="#" class="row root spaced"><span class="toggle closed"><svg class="chevr"><use href="#i-chevr" /></svg></span><svg class="ic"><use :href="'#i-' + r.icon" /></svg>{{ r.name }}</a>
        </nav>

        <main class="files">
          <table>
            <colgroup><col class="c-name" /><col class="c-date" /><col class="c-type" /><col class="c-size" /></colgroup>
            <thead>
              <tr>
                <th class="h-name">Name</th>
                <th class="h-date">Date modified<svg class="sorted"><use href="#i-chev" /></svg></th>
                <th>Type</th>
                <th>Size</th>
              </tr>
            </thead>
            <tbody>
              <tr v-for="f in files" :key="f.name">
                <td><div class="file"><svg class="ic"><use :href="'#i-' + f.icon" /></svg>{{ f.name }}</div></td>
                <td>{{ f.date }}</td>
                <td>{{ f.type }}</td>
                <td class="size">{{ f.size }}</td>
              </tr>
            </tbody>
            <tbody>
              <tr class="group">
                <td colspan="4"><div class="group-head"><svg class="chev"><use href="#i-chev" /></svg>A long time ago</div></td>
              </tr>
              <tr v-for="f in olderFiles" :key="f.name">
                <td><div class="file"><svg class="ic"><use :href="'#i-' + f.icon" /></svg>{{ f.name }}</div></td>
                <td>{{ f.date }}</td>
                <td>{{ f.type }}</td>
                <td class="size">{{ f.size }}</td>
              </tr>
            </tbody>
          </table>
          <div class="scrollbar"><div class="thumb"></div></div>
        </main>
      </div>

      <footer class="status">
        <span class="count">79 items</span>
        <button class="mode on" aria-label="Details view"><svg class="ic"><use href="#i-details" /></svg></button>
        <button class="mode" aria-label="Large icons view"><svg class="ic"><use href="#i-tiles" /></svg></button>
      </footer>
    </div>

    <div class="taskbar">
      <nav class="apps" aria-label="Taskbar">
        <button v-for="a in apps" :key="a.icon" :aria-label="a.label" :class="{ running: a.running, current: a.active, small: a.small }"><svg class="app"><use :href="'#i-' + a.icon" /></svg></button>
      </nav>
      <div class="tray">
        <button aria-label="Show hidden icons"><svg class="chev wide flip"><use href="#i-chev" /></svg></button>
        <button aria-label="Discord"><svg class="ic"><use href="#i-discord" /></svg></button>
        <button class="keys" aria-label="Touch keyboard"><svg class="ic"><use href="#i-keyboard" /></svg></button>
        <button class="lang" lang="ar">ع</button>
        <button aria-label="Network"><svg class="ic"><use href="#i-wifi" /></svg></button>
        <button aria-label="Volume"><svg class="ic"><use href="#i-volume" /></svg></button>
        <button aria-label="Battery"><svg class="ic"><use href="#i-battery" /></svg></button>
        <button class="clock"><span>4:53 PM</span><span>8/4/2025</span></button>
        <button aria-label="Notifications"><svg class="ic"><use href="#i-bell" /></svg></button>
      </div>
    </div>
  </div>
</template>

<style>
body {
  margin: 0;
  background: #f9f9f9;
}
</style>

<style scoped>
.desktop {
  display: flex;
  flex-direction: column;
  min-height: 100vh;
  font-family: "Open Sans", "Noto Sans", "DejaVu Sans", sans-serif;
  font-size: 17px;
  line-height: 24px;
  color: #191919;
  background: #f9f9f9;
}
.sprite { position: absolute; }
button {
  display: flex;
  align-items: center;
  justify-content: center;
  padding: 0;
  border: 0;
  background: none;
  font: inherit;
  color: inherit;
}
a { color: inherit; text-decoration: none; }
svg { flex: none; display: block; }
.ic { width: 24px; height: 24px; }
.ic16 { width: 16px; height: 16px; }
.chev { width: 13px; height: 7px; }
.chevr { width: 7px; height: 13px; }
.wide { width: 18px; height: 9px; }
.flip { transform: scaleY(-1); }

.window { flex: 1; display: flex; flex-direction: column; }

.titlebar { display: flex; align-items: center; height: 36px; padding: 0 1px 0 6px; }
.title { margin: 0 0 0 5px; font-size: 17px; font-weight: 400; color: #fff; }
.controls { display: flex; margin-left: auto; }
.controls button { width: 70px; height: 36px; padding-top: 6px; }

.toolbar { display: flex; align-items: center; height: 77px; padding-left: 10px; border-bottom: 2px solid #e5e5e5; }
.labelled { gap: 13px; height: 48px; padding: 0 22px 0 21px; }
.drop { width: 9px; height: 5px; margin-left: -2px; color: #777; }
.tool { width: 72px; height: 48px; }
.more { width: 66px; height: 48px; }
.sep { width: 2px; height: 48px; margin: 0 3px; background: #e8e8e8; }

.address { display: flex; align-items: center; height: 73px; padding: 0 12px 2px 6px; }
.nav { width: 53px; height: 48px; color: #5c5c5c; }
.faded { color: #a5a5a5; }
.arrow { width: 24px; height: 24px; }
.forward { transform: rotate(180deg); }
.up { transform: rotate(90deg); }
.recent { width: 37px; height: 48px; color: #5c5c5c; }
.crumbs { display: flex; flex: 1; align-items: center; gap: 13px; padding-left: 18px; }
.crumb-sep { width: 5px; height: 10px; color: #555; }
.side { width: 51px; height: 48px; color: #6a6a6a; }
.search {
  display: flex;
  align-items: center;
  box-sizing: border-box;
  width: 223px;
  height: 53px;
  margin-left: 13px;
  padding: 0 12px 0 18px;
  gap: 18px;
  border: 1px solid #d0d0d0;
  background: #fdfdfd;
}
.search input { flex: 1; min-width: 0; padding: 0; border: 0; outline: 0; background: none; font: inherit; color: #fff; }
.search input::placeholder { color: #fff; opacity: 1; }

.body { flex: 1; display: flex; }
.sidebar { display: flex; flex-direction: column; gap: 6px; box-sizing: border-box; width: 356px; padding: 17px 4px 0 3px; border-right: 1px solid #dedede; }
.row { display: flex; align-items: center; gap: 5px; height: 42px; padding-right: 4px; border-radius: 2px; }
.root { padding-left: 7px; }
.child { padding-left: 54px; }
.spaced { margin-top: 12px; }
.active { background: #d3d3d3; }
.label { flex: 1; }
.toggle { display: flex; justify-content: center; width: 24px; margin-right: 6px; color: #333; }
.closed { color: #858585; }

.files { flex: 1; display: flex; justify-content: space-between; }
table { width: 1029px; table-layout: fixed; border-collapse: collapse; align-self: flex-start; }
.c-name { width: 469px; }
.c-date { width: 243px; }
.c-type { width: 203px; }
.c-size { width: 114px; }
th { height: 41px; padding: 0; text-align: left; font-weight: 400; color: #4c607a; }
.h-name { padding-left: 46px; }
.h-date { position: relative; }
.sorted { position: absolute; top: 0; left: 107px; width: 11px; height: 6px; color: #555; }
td { height: 47px; padding: 0; color: #6d6d6d; white-space: nowrap; }
.file { display: flex; align-items: center; gap: 6px; padding-left: 28px; color: #191919; }
.file .ic { margin-bottom: 3px; }
.size { text-align: right; }
.group td { height: 37px; }
.group-head { display: flex; align-items: center; gap: 8px; padding: 0 0 2px 12px; color: #1e3287; }
.group-head .chev { color: #777; }
.scrollbar { display: flex; flex-direction: column; justify-content: flex-end; width: 10px; padding: 0 8px 26px 0; }
.thumb { height: 141px; border-radius: 5px; background: #868686; }

.status { display: flex; align-items: center; height: 35px; padding: 0 8px 0 22px; }
.count { margin-right: auto; padding-right: 16px; border-right: 2px solid #fff; line-height: 18px; color: #1e395b; }
.mode { box-sizing: border-box; width: 33px; height: 35px; }
.mode.on { border: 1px solid #26a0da; background: #c5e4f3; }
.mode.on .ic { margin: 4px 0 0 3px; }

.taskbar { display: grid; grid-template-columns: 1fr auto 1fr; align-items: center; height: 72px; background: #f2f2f2; }
.apps { grid-column: 2; display: flex; gap: 8px; padding-left: 2px; }
.apps button { position: relative; box-sizing: border-box; width: 58px; height: 58px; border-radius: 6px; }
.app { width: 36px; height: 36px; }
.apps .small .app { width: 34px; height: 34px; }
.apps .current { background: #fafafa; box-shadow: 0 0 1px 1px #e6e6e6; }
.running::after,
.current::after { content: ""; position: absolute; bottom: 0; left: 25px; width: 9px; height: 5px; border-radius: 3px; background: #868686; }
.current::after { left: 17px; width: 24px; background: #5f7687; }

.tray { display: flex; align-items: center; justify-content: flex-end; gap: 12px; padding-right: 30px; }
.tray button { min-width: 24px; }
.tray .keys { margin-left: 6px; }
.tray .lang { margin: 0 21px; }
.tray .clock { flex-direction: column; align-items: flex-end; margin: 0 5px 0 17px; }
</style>
